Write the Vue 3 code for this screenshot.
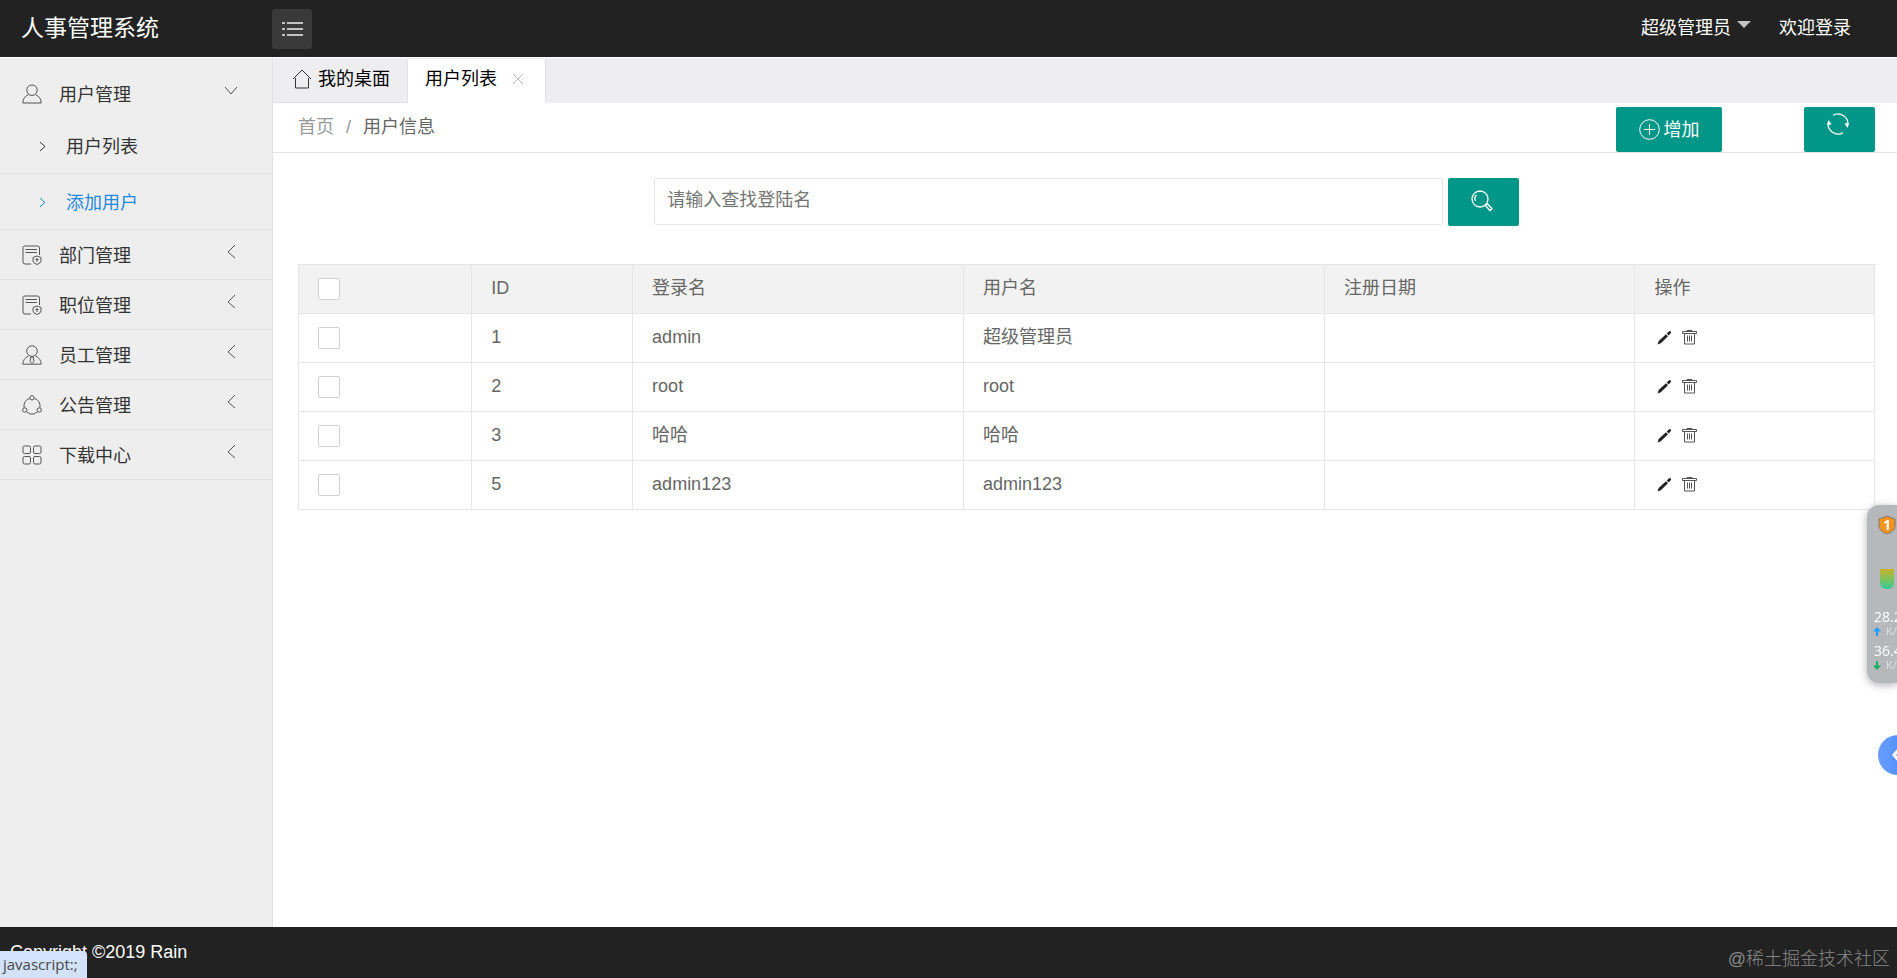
<template>
    <div class="layout">
        <header class="header">
            <h1 class="logo">人事管理系统</h1>
            <button class="toggle" type="button" aria-label="收起菜单">
                <svg width="21" height="16" viewBox="0 0 21 16" fill="none" stroke="#eee" stroke-width="1.500">
                    <path d="M0 2h3M5 2h16M0 8h3M5 8h16M0 14h3M5 14h16" />
                </svg>
            </button>
            <nav class="header-nav">
                <a href="javascript:;" class="account">超级管理员<span class="caret"></span></a>
                <a href="javascript:;">欢迎登录</a>
            </nav>
        </header>

        <div class="body">
            <aside class="sidebar">
                <div v-for="menu in menus" :key="menu.title" :class="['menu', { open: openMenu === menu.title }]">
                    <button class="menu-title" type="button" @click="toggleMenu(menu.title)">
                        <svg class="menu-icon" width="20" height="20" viewBox="0 0 20 20">
                            <path v-for="d in menu.icon" :key="d" :d="d" />
                        </svg>
                        <span class="menu-text">{{ menu.title }}</span>
                        <svg class="menu-arrow" width="14" height="14" viewBox="0 0 14 14">
                            <path :d="openMenu === menu.title ? 'M1 3l6 7 6-7' : 'M11 0L4 7l7 6'" />
                        </svg>
                    </button>
                    <ul v-if="openMenu === menu.title && menu.children.length" class="submenu">
                        <li v-for="child in menu.children" :key="child">
                            <a href="javascript:;" :class="{ current: child === '添加用户' }">
                                <svg width="7" height="11" viewBox="0 0 7 11"><path d="M1 1l5 4.500-5 4.500" /></svg>
                                <span>{{ child }}</span>
                            </a>
                        </li>
                    </ul>
                </div>
            </aside>

            <main class="main">
                <div class="tabs">
                    <div class="tab">
                        <button type="button" class="tab-name">
                            <svg width="20" height="20" viewBox="0 0 20 20" fill="none" stroke="#333">
                                <path d="M1 10L10 1l9 9M3.500 9v10h13V9" />
                            </svg>
                            <span>我的桌面</span>
                        </button>
                    </div>
                    <div class="tab active">
                        <button type="button" class="tab-name">用户列表</button>
                        <button type="button" class="tab-close" aria-label="关闭">
                            <svg width="12" height="12" viewBox="0 0 12 12" fill="none" stroke="#bbb">
                                <path d="M1 1l10 10M11 1L1 11" />
                            </svg>
                        </button>
                    </div>
                </div>

                <div class="toolbar">
                    <div class="breadcrumb">
                        <a href="javascript:;">首页</a>
                        <span class="slash">/</span>
                        <span class="here">用户信息</span>
                    </div>
                    <button type="button" class="btn btn-add">
                        <svg width="21" height="21" viewBox="0 0 21 21" fill="none" stroke="#fff">
                            <circle cx="10.500" cy="10.500" r="9.800" />
                            <path d="M10.500 5v11M5 10.500h11" />
                        </svg>
                        <span>增加</span>
                    </button>
                    <button type="button" class="btn btn-refresh" aria-label="刷新">
                        <svg width="22" height="22" viewBox="0 0 22 22" fill="none" stroke="#fff" stroke-width="1.300">
                            <path d="M6 2.300A10 10 0 0 1 20.800 12.500M16 19.700A10 10 0 0 1 1.200 9.500" />
                            <path d="M17.500 10.500l3 4.500 1.300-5zM4.500 11.500l-3-4.500L.2 12z" fill="#fff" stroke="none" />
                        </svg>
                    </button>
                </div>

                <div class="content">
                    <form class="search" @submit.prevent>
                        <input v-model="keyword" type="text" placeholder="请输入查找登陆名" aria-label="登陆名">
                        <button type="submit" class="btn btn-search" aria-label="查找">
                            <svg width="22" height="22" viewBox="0 0 22 22" fill="none" stroke="#fff" stroke-width="1.300">
                                <circle cx="9" cy="9" r="8" />
                                <path d="M4.500 11A5 5 0 0 1 5.500 5M14.500 15.500l4.500 5 2-1.800-4.500-5z" />
                            </svg>
                        </button>
                    </form>

                    <table class="table">
                        <colgroup>
                            <col class="col-check">
                            <col class="col-id">
                            <col class="col-login">
                            <col class="col-name">
                            <col class="col-date">
                            <col>
                        </colgroup>
                        <thead>
                            <tr>
                                <th><input v-model="allChecked" type="checkbox" aria-label="全选"></th>
                                <th>ID</th>
                                <th>登录名</th>
                                <th>用户名</th>
                                <th>注册日期</th>
                                <th>操作</th>
                            </tr>
                        </thead>
                        <tbody>
                            <tr v-for="user in users" :key="user.id">
                                <td><input v-model="checked" type="checkbox" :value="user.id" :aria-label="user.login"></td>
                                <td>{{ user.id }}</td>
                                <td>{{ user.login }}</td>
                                <td>{{ user.name }}</td>
                                <td>{{ user.date }}</td>
                                <td>
                                    <div class="actions">
                                        <button type="button" aria-label="编辑">
                                            <svg width="15" height="15" viewBox="0 0 15 15" fill="#222">
                                                <path d="M.5 14.500l1.200-3.500L9 4.200l2 2L3.800 13.200zM9.800 3.500L11.800 1.600Q13 .7 13.800 1.500T13.500 3.600L11.700 5.500z" />
                                            </svg>
                                        </button>
                                        <button type="button" aria-label="删除">
                                            <svg width="15" height="15" viewBox="0 0 15 15" fill="none" stroke="#555">
                                                <path d="M5 1.500V.500h5v1M.500 1.500h14v2H.500zM2.500 3.500v10.500h10V3.500M5.500 5.500v6M7.500 5.500v6M9.500 5.500v6" />
                                            </svg>
                                        </button>
                                    </div>
                                </td>
                            </tr>
                        </tbody>
                    </table>
                </div>
            </main>
        </div>

        <footer class="footer">
            <span>Copyright ©2019 Rain</span>
            <span class="watermark">@稀土掘金技术社区</span>
        </footer>

        <div class="status">javascript:;</div>

        <!-- 桌面悬浮球 -->
        <div class="monitor">
            <svg class="shield" width="18" height="20" viewBox="0 0 18 20">
                <path d="M9 1l8 3v7c0 4-4 6.500-8 8-4-1.500-8-4-8-8V4z" fill="#f7931e" stroke="#777" />
                <text x="9" y="15" text-anchor="middle">1</text>
            </svg>
            <div class="battery"></div>
            <div class="speed">
                <span class="speed-num">28.2</span>
                <span class="speed-unit">
                    <svg width="8" height="9" viewBox="0 0 8 9" fill="#1e9fff"><path d="M4 0l4 4.500H5V9H3V4.500H0z" /></svg>
                    K/s
                </span>
            </div>
            <div class="speed">
                <span class="speed-num">36.4</span>
                <span class="speed-unit">
                    <svg width="8" height="9" viewBox="0 0 8 9" fill="#12b264"><path d="M4 9l4-4.500H5V0H3v4.500H0z" /></svg>
                    K/s
                </span>
            </div>
        </div>
        <button type="button" class="drawer" aria-label="展开">
            <svg width="10" height="16" viewBox="0 0 10 16" fill="none" stroke="#fff" stroke-width="3"><path d="M8 1L2 8l6 7" /></svg>
        </button>
    </div>
</template>

<script setup>
    import { ref, computed } from 'vue';

    const docIcon = [
        'M9 19H3Q1 19 1 17V2.500Q1 1 3 1H15.500Q17.500 1 17.500 3V10',
        'M3.500 4.500H15M3.500 7.500H15',
        'M11 12.500l4-1.500 4 1.500v3.500q0 2-4 3.500-4-1.500-4-3.500z',
        'M15 13v4M13.500 14.500h3'
    ]

    const menus = [
        {
            title: '用户管理',
            icon: [
                'M10 1C6.800 1 4.800 3.200 4.800 6S6.800 11.500 10 11.500 15.200 8.800 15.200 6 13.200 1 10 1z',
                'M6.500 10.500C3 12 .8 15 .8 19h18.400c0-4-2.200-7-5.700-8.500'
            ],
            children: ['用户列表', '添加用户']
        },
        { title: '部门管理', icon: docIcon, children: [] },
        { title: '职位管理', icon: docIcon, children: [] },
        {
            title: '员工管理',
            icon: [
                'M10 .8A5.300 5.300 0 1 0 10 11.400 5.300 5.300 0 1 0 10 .8z',
                'M6.500 11C3 12.500.8 15.500.8 19.200h18.400c0-3.700-2.200-6.700-5.700-8.200',
                'M8.800 12h2.400l.8 4.500-2 2-2-2z'
            ],
            children: []
        },
        {
            title: '公告管理',
            icon: [
                'M12.200 2.800A2.200 2.200 0 1 0 7.800 2.800 2.200 2.200 0 1 0 12.200 2.800z',
                'M5 15A2.200 2.200 0 1 0 .6 15 2.200 2.200 0 1 0 5 15z',
                'M19.400 15A2.200 2.200 0 1 0 15 15 2.200 2.200 0 1 0 19.400 15z',
                'M7.500 3.300Q1.500 5.500 2 12.500M12.500 3.300Q18.500 5.500 18 12.500M4.800 17.200Q10 21 15.200 17.200'
            ],
            children: []
        },
        {
            title: '下载中心',
            icon: [
                'M2.500 1H7Q8.500 1 8.500 2.500V7Q8.500 8.500 7 8.500H2.500Q1 8.500 1 7V2.500Q1 1 2.500 1z',
                'M13 1H17.500Q19 1 19 2.500V7Q19 8.500 17.500 8.500H13Q11.500 8.500 11.500 7V2.500Q11.500 1 13 1z',
                'M2.500 11.500H7Q8.500 11.500 8.500 13V17.500Q8.500 19 7 19H2.500Q1 19 1 17.500V13Q1 11.500 2.500 11.500z',
                'M13 11.500H17.500Q19 11.500 19 13V17.500Q19 19 17.500 19H13Q11.500 19 11.500 17.500V13Q11.500 11.500 13 11.500z'
            ],
            children: []
        }
    ]

    const users = [
        { id: 1, login: 'admin', name: '超级管理员', date: '' },
        { id: 2, login: 'root', name: 'root', date: '' },
        { id: 3, login: '哈哈', name: '哈哈', date: '' },
        { id: 5, login: 'admin123', name: 'admin123', date: '' }
    ]

    const openMenu = ref('用户管理');
    const keyword = ref('');
    const checked = ref([]);

    const toggleMenu = (title) => {
        openMenu.value = openMenu.value === title ? '' : title;
    }

    // 全选
    const allChecked = computed({
        get: () => checked.value.length === users.length,
        set: (val) => { checked.value = val ? users.map(u => u.id) : [] }
    })
</script>

<style>
    body {
        margin: 0;
        background: #fff;
    }
</style>

<style scoped>
    * {
        box-sizing: border-box;
    }

    .layout {
        display: flex;
        flex-direction: column;
        min-height: 100vh;
        font-family: "Liberation Sans", "Noto Sans CJK SC", sans-serif;
        font-size: 18px;
        line-height: 24px;
        color: #666;
    }

    a {
        color: inherit;
        text-decoration: none;
    }

    button {
        display: flex;
        align-items: center;
        padding: 0;
        border: none;
        background: transparent;
        font: inherit;
        color: inherit;
        cursor: pointer;
    }

    svg {
        flex: none;
    }

    /* 顶部 */
    .header {
        display: flex;
        align-items: center;
        height: 58px;
        padding: 0 46px 0 21px;
        background: #222;
        border-bottom: 1px solid #fff;
        color: #fff;
    }

    .logo {
        width: 251px;
        margin: 0;
        padding-bottom: 2px;
        font-size: 23px;
        font-weight: 400;
    }

    .toggle {
        justify-content: center;
        width: 40px;
        height: 40px;
        border-radius: 3px;
        background: #393939;
    }

    .header-nav {
        display: flex;
        gap: 28px;
        margin-left: auto;
        padding-bottom: 2px;
    }

    .account {
        display: flex;
        gap: 6px;
    }

    .caret {
        margin-top: 5px;
        height: 7px;
        border: 7px solid transparent;
        border-top-color: #c2c2c2;
        border-bottom: none;
    }

    .body {
        display: flex;
        flex: 1;
    }

    /* 左侧菜单 */
    .sidebar {
        flex: none;
        width: 273px;
        padding-top: 11px;
        background: #eee;
        border-right: 1px solid #e2e2e2;
        color: #333;
    }

    .menu {
        border-bottom: 1px solid #e2e2e2;
    }

    .menu-title {
        width: 100%;
        height: 49px;
        padding: 0 34px 0 22px;
    }

    .menu-icon {
        fill: none;
        stroke: #555;
    }

    .menu-text {
        padding-top: 3px;
        margin-left: 17px;
    }

    .menu-arrow {
        margin: 0 0 6px auto;
        fill: none;
        stroke: #555;
    }

    .submenu {
        margin: 0;
        padding: 0;
        list-style: none;
    }

    .submenu a {
        display: flex;
        align-items: center;
        gap: 20px;
        height: 55px;
        padding: 2px 0 0 39px;
    }

    .submenu li + li {
        border-top: 1px solid #e2e2e2;
    }

    .submenu svg {
        fill: none;
        stroke: currentColor;
    }

    .submenu .current {
        color: #1e88e5;
    }

    /* 标签页 */
    .main {
        flex: 1;
        min-width: 0;
    }

    .tabs {
        display: flex;
        height: 45px;
        padding-top: 1px;
        background: #eeeef0;
        color: #000;
    }

    .tab {
        display: flex;
        align-items: center;
        gap: 15px;
        padding: 0 17px 3px 19px;
        border-right: 1px solid #e2e2e2;
        border-bottom: 1px solid #e2e2e2;
    }

    .tab.active {
        padding: 0 21px 3px 17px;
        background: #fff;
        border-bottom-color: #fff;
    }

    .tab-name {
        gap: 6px;
    }

    .toolbar {
        display: flex;
        align-items: flex-end;
        height: 50px;
        padding: 0 22px 0 25px;
        border-bottom: 1px solid #e5e5e5;
    }

    .breadcrumb {
        display: flex;
        gap: 12px;
        align-self: center;
        margin-right: auto;
        padding-bottom: 2px;
        color: #999;
    }

    .here {
        color: #666;
    }

    .btn {
        justify-content: center;
        border-radius: 2px;
        background: #009688;
        color: #fff;
    }

    .btn-add {
        gap: 4px;
        width: 106px;
        height: 45px;
        margin-right: 82px;
    }

    .btn-refresh {
        width: 71px;
        height: 45px;
        padding: 0 3px 11px 0;
    }

    .content {
        padding: 25px 22px 25px 25px;
    }

    .search {
        display: flex;
        justify-content: center;
        gap: 5px;
        margin-bottom: 38px;
    }

    .search input {
        width: 50%;
        height: 47px;
        padding: 0 13px 2px 12px;
        border: 1px solid #e6e6e6;
        border-radius: 2px;
        font: inherit;
        color: #333;
        outline: none;
    }

    .search input::placeholder {
        color: #757575;
    }

    .btn-search {
        width: 71px;
        height: 48px;
        padding: 0 2px 2px 0;
    }

    /* 用户表格 */
    .table {
        width: 100%;
        table-layout: fixed;
        border-collapse: collapse;
    }

    .col-check {
        width: 11%;
    }

    .col-id {
        width: 10.2%;
    }

    .col-login {
        width: 21%;
    }

    .col-name {
        width: 22.9%;
    }

    .col-date {
        width: 19.7%;
    }

    .table th,
    .table td {
        height: 49px;
        padding: 0 19px 2px;
        border: 1px solid #e6e6e6;
        font-weight: 400;
        text-align: left;
    }

    .table th {
        background: #f2f2f2;
    }

    .table input {
        display: block;
        width: 22px;
        height: 22px;
        margin: 2px 0 0;
        appearance: none;
        border: 1px solid #d2d2d2;
        border-radius: 2px;
        background: #fff;
    }

    .table input:checked {
        border-color: #009688;
        background: #009688;
    }

    .actions {
        display: flex;
        gap: 10px;
        padding-left: 3px;
    }

    /* 底部 */
    .footer {
        display: flex;
        align-items: center;
        justify-content: space-between;
        height: 51px;
        padding: 0 7px 2px 10px;
        background: #222;
        color: #fff;
    }

    .watermark {
        padding-top: 14px;
        font-weight: 300;
        color: #888;
    }

    .status {
        position: fixed;
        left: 0;
        bottom: 0;
        height: 27px;
        padding: 0 9px 0 3px;
        border-top-right-radius: 4px;
        background: #d3e3fd;
        font-family: "Open Sans", "Noto Sans", sans-serif;
        font-size: 15px;
        line-height: 27px;
        color: #474747;
    }

    .monitor {
        position: fixed;
        right: 0;
        top: 505px;
        width: 30px;
        height: 178px;
        padding: 10px 0 0 6px;
        overflow: hidden;
        border-radius: 12px 0 0 12px;
        background: #b7b8bc;
        box-shadow: 0 2px 8px rgba(0, 0, 0, 0.3);
        font-family: "Open Sans", "Noto Sans", sans-serif;
        color: #fff;
    }

    .shield {
        display: block;
        margin-left: 5px;
    }

    .shield text {
        fill: #fff;
        font-size: 14px;
        font-weight: 700;
    }

    .battery {
        width: 14px;
        height: 20px;
        margin: 34px 0 20px 7px;
        border-radius: 0 0 6px 6px;
        background: linear-gradient(#c9b22a, #7fc05a, #2fcc9a);
    }

    .speed {
        height: 34px;
    }

    .speed-num {
        display: block;
        padding-left: 1px;
        font-size: 14px;
        line-height: 16px;
    }

    .speed-unit {
        display: flex;
        align-items: center;
        gap: 5px;
        font-size: 11px;
        line-height: 12px;
        color: #e0e0e0;
        white-space: nowrap;
    }

    .drawer {
        position: fixed;
        right: -21px;
        top: 735px;
        width: 40px;
        height: 40px;
        padding-left: 14px;
        border-radius: 50%;
        background: linear-gradient(90deg, #6a9fff, #3f83ff);
    }
</style>
